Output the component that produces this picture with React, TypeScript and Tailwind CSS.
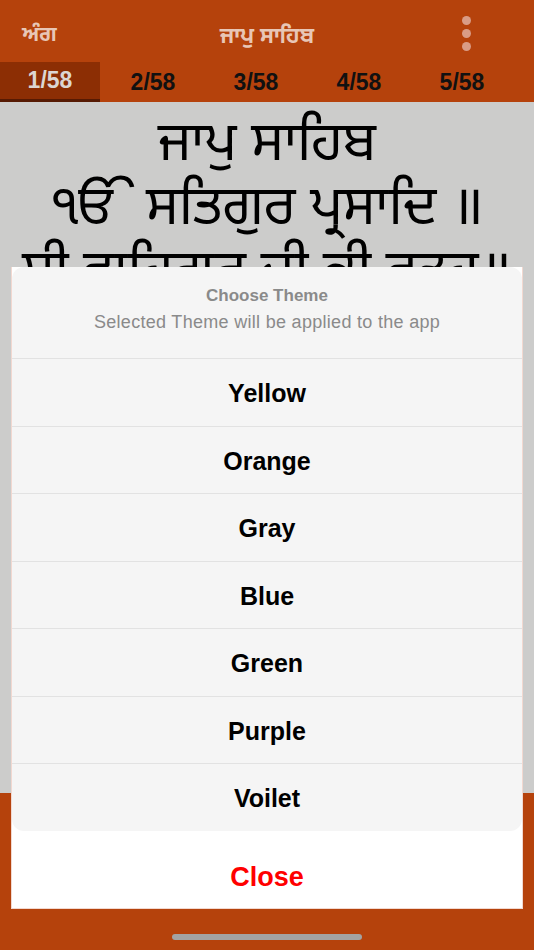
import React from 'react';

const tabs = ['1/58', '2/58', '3/58', '4/58', '5/58'];
const themes = ['Yellow', 'Orange', 'Gray', 'Blue', 'Green', 'Purple', 'Voilet'];

const ui = { fontFamily: '"Liberation Sans", Arial, sans-serif' };
const gurmukhi = { fontFamily: '"Noto Sans Gurmukhi", "Noto Sans", "Lohit Gurmukhi", sans-serif' };

export default function App() {
  return (
    <div className="relative w-[534px] h-[950px] overflow-hidden flex flex-col" style={ui}>
      {/* Top bar */}
      <div className="h-[62px] bg-[#b5420c] flex items-center pt-[12px] px-[22px] shrink-0">
        <div className="w-[90px] text-[21px] font-bold text-[#e8c6b6]" style={gurmukhi}>
          ਅੰਗ
        </div>
        <div className="flex-1 text-center text-[22px] font-bold text-[#e8c6b6]" style={gurmukhi}>
          ਜਾਪੁ ਸਾਹਿਬ
        </div>
        <div className="w-[90px] flex justify-end pr-[41px] -mt-[8px]">
          <div className="flex flex-col gap-[4px]">
            <span className="w-[9px] h-[9px] rounded-full bg-[#d99c86]" />
            <span className="w-[9px] h-[9px] rounded-full bg-[#d99c86]" />
            <span className="w-[9px] h-[9px] rounded-full bg-[#d99c86]" />
          </div>
        </div>
      </div>

      {/* Page tabs */}
      <div className="h-[40px] bg-[#b5420c] flex shrink-0">
        {tabs.map((t, i) => (
          <div key={t} className="w-[103px] shrink-0">
            <div
              className={
                i === 0
                  ? 'w-[100px] h-full bg-[#8c2e04] border-b-[3px] border-[#561a03] flex items-center justify-center text-[23px] font-bold text-[#dcd6d2]'
                  : 'w-[100px] h-full flex items-center justify-center text-[23px] font-bold text-[#111]'
              }
            >
              {t}
            </div>
          </div>
        ))}
      </div>

      {/* Gurbani content */}
      <div className="flex-1 bg-[#cccccb] flex flex-col items-center pt-[13px] text-black leading-[64px] text-[55px]" style={gurmukhi}>
        <div>ਜਾਪੁ ਸਾਹਿਬ</div>
        <div className="whitespace-nowrap">ੴ ਸਤਿਗੁਰ ਪ੍ਰਸਾਦਿ ॥</div>
        <div className="whitespace-nowrap">ਸ੍ਰੀ ਵਾਹਿਗੁਰੂ ਜੀ ਕੀ ਫਤਹ॥</div>
      </div>

      {/* Bottom bar */}
      <div className="h-[157px] bg-[#b5420c] shrink-0" />

      {/* Theme action sheet */}
      <div className="absolute inset-0 flex flex-col justify-end px-[11px] pb-[41px]">
        <div className="bg-white border-x border-b border-[#f2d8d0]">
          <div className="bg-[#f5f5f5] rounded-[12px]">
            <div className="h-[92px] flex flex-col items-center pt-[19px] text-[#8a8a8a] border-b border-[#e2e2e2]">
              <div className="text-[17px] font-bold leading-[20px]">Choose Theme</div>
              <div className="text-[18px] leading-[22px] mt-[5px] tracking-[0.3px]">Selected Theme will be applied to the app</div>
            </div>
            {themes.map((th, i) => (
              <div
                key={th}
                className={
                  i === themes.length - 1
                    ? 'h-[67px] flex items-center justify-center pt-[3px] text-[25px] font-bold text-black'
                    : 'h-[67.5px] flex items-center justify-center pt-[3px] text-[25px] font-bold text-black border-b border-[#e2e2e2]'
                }
              >
                {th}
              </div>
            ))}
          </div>
          <div className="h-[77px] flex items-center justify-center pt-[16px] text-[27px] font-bold text-[#ff0000]">
            Close
          </div>
        </div>
      </div>

      {/* Home indicator */}
      <div className="absolute left-[172px] bottom-[10px] w-[190px] h-[6px] rounded-full bg-[#a3a3a3]" />
    </div>
  );
}
